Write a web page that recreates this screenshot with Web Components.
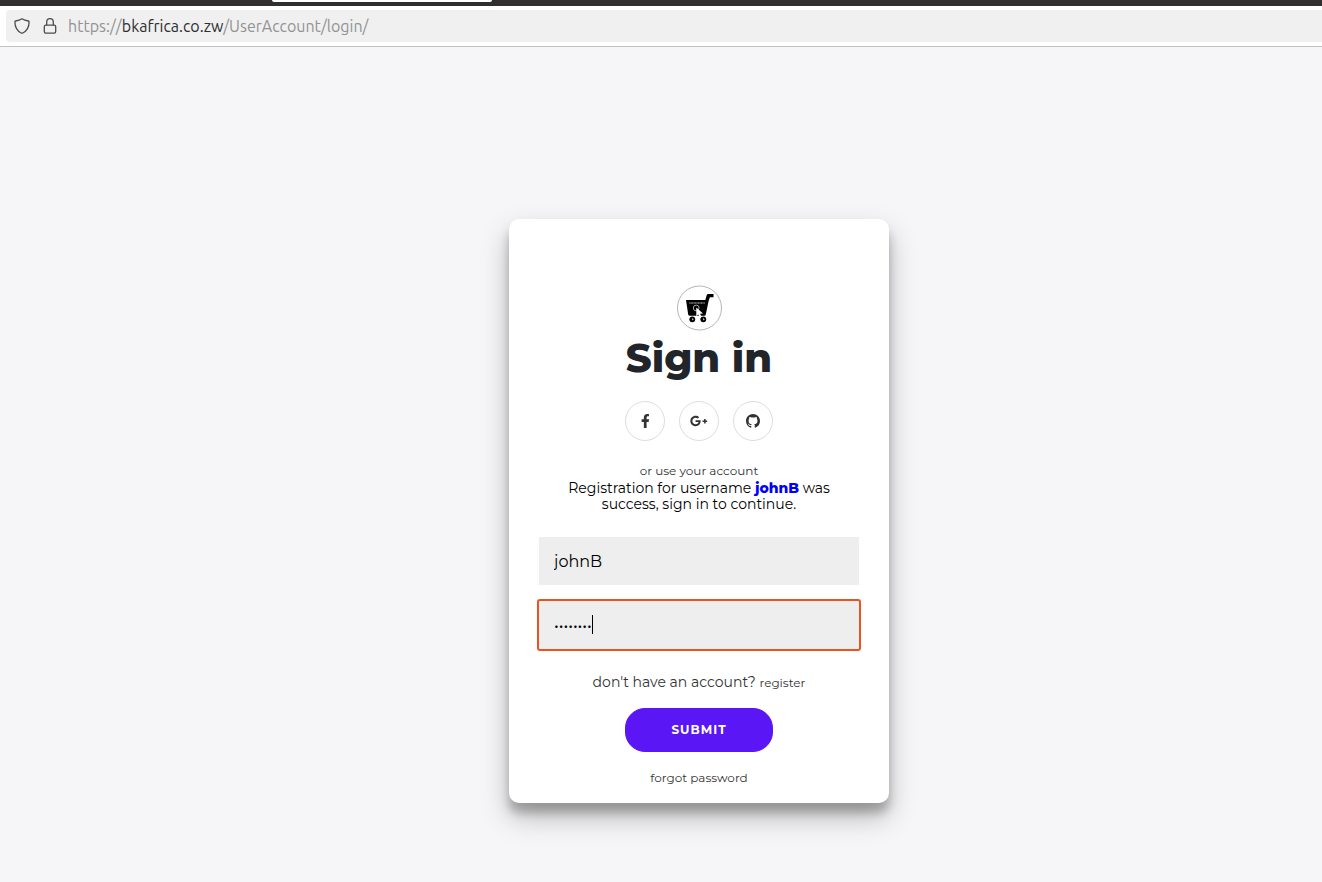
<!DOCTYPE html>
<html lang="en">
<head>
<meta charset="utf-8">
<meta name="viewport" content="width=device-width, initial-scale=1">
<title>Sign in</title>
<style>
  body {
    margin: 0;
    min-height: 100vh;
    display: flex;
    flex-direction: column;
    background: #f6f5f7;
    font-family: Montserrat, Inter, sans-serif;
    color: #333;
  }
</style>
</head>
<body>
<browser-bar>
  <span slot="scheme">https://</span>
  <span slot="host">bkafrica.co.zw</span>
  <span slot="path">/UserAccount/login/</span>
</browser-bar>
<login-page>
  <sign-in-card user="johnB"></sign-in-card>
</login-page>

<script>
class BrowserBar extends HTMLElement {
  constructor() {
    super();
    this.attachShadow({ mode: 'open' });
  }

  connectedCallback() {
    this.shadowRoot.innerHTML = `
      <style>
        :host {
          display: block;
          background: #fff;
          border-bottom: 1px solid #c2c2c3;
          font-family: Ubuntu, "Noto Sans", sans-serif;
          font-size: 16px;
        }

        .tabs {
          height: 6px;
          padding-left: 272px;
          background: #312e2f;
        }

        .tab {
          width: 220px;
          height: 2px;
          border-radius: 0 0 3px 3px;
          background: #fff;
        }

        .field {
          display: flex;
          align-items: center;
          height: 32px;
          margin: 4px 0 4px 6px;
          padding-left: 8px;
          border-radius: 4px 0 0 4px;
          background: #f0f0f0;
        }

        svg {
          flex: none;
          width: 16px;
          height: 16px;
          margin-right: 12px;
          fill: none;
          stroke: #4c4c4e;
          stroke-width: 1.3;
          stroke-linejoin: round;
        }

        svg + .url {
          margin-left: -2px;
        }

        .url {
          color: #939394;
          white-space: nowrap;
        }

        .host {
          color: #2e2e30;
        }
      </style>
      <div class="tabs"><div class="tab"></div></div>
      <div class="field">
        <svg viewBox="0 0 16 16"><path d="M8 .8C6.3 2 4 2.7 1.6 3c-.5.1-.7.4-.7.8 0 5 2 9 6.300 11.200q.8.400 1.600 0C13.100 12.800 15.100 8.800 15.100 3.800c0-.4-.2-.7-.7-.8C12 2.700 9.700 2 8 .8z"/></svg>
        <svg viewBox="0 0 16 16"><rect x="2.300" y="7.200" width="11.400" height="8" rx="1.600"/><path d="M4.700 7.200V4a3.300 3.300 0 0 1 6.600 0v3.200"/></svg>
        <div class="url"><slot name="scheme"></slot><span class="host"><slot name="host"></slot></span><slot name="path"></slot></div>
      </div>
    `;
  }
}

class LoginPage extends HTMLElement {
  constructor() {
    super();
    this.attachShadow({ mode: 'open' });
  }

  connectedCallback() {
    this.shadowRoot.innerHTML = `
      <style>
        :host {
          display: flex;
          flex: 1;
          justify-content: center;
          align-items: flex-start;
          padding: 172px 0 48px 76px;
        }
      </style>
      <slot></slot>
    `;
  }
}

class CartLogo extends HTMLElement {
  constructor() {
    super();
    this.attachShadow({ mode: 'open' });
  }

  connectedCallback() {
    this.shadowRoot.innerHTML = `
      <style>
        :host { display: block; }
        svg { display: block; width: 46px; height: 46px; }
      </style>
      <svg viewBox="0 0 46 46" role="img" aria-label="Shop logo">
        <circle cx="23.500" cy="23" r="22" fill="#fff" stroke="#b5b5b5"/>
        <path d="M10 15h19.300l1.500-5q.3-1 1.300-1h5.400v3.200h-3.600L32.600 16l-2.800 13.400q-.3 1.300-1.600 1.300H13.800q-1.300 0-1.600-1.300z" fill="#000"/>
        <path d="M13.300 18h15.400" stroke="#ccc" stroke-width="1.200" stroke-dasharray="1.300 .4 .8 .4"/>
        <circle cx="20.200" cy="23" r="2.900" fill="none" stroke="#bbb" stroke-width=".9"/>
        <path d="M20.300 22.500v8.800l2-1.700 1.500 3 1.700-.8-1.400-3 2.900-.3z" fill="#fff"/>
        <circle cx="16.300" cy="34.300" r="2.900" fill="#000"/>
        <circle cx="27.300" cy="34.300" r="2.900" fill="#000"/>
        <path d="M16 33.100l2 1.200-2 1.200zM27 33.100l2 1.200-2 1.200z" fill="#aaa"/>
      </svg>
    `;
  }
}

const socialIcons = {
  facebook: '<svg viewBox="0 0 320 512"><path d="M279.100 288l14.200-92.700h-88.900v-60.100c0-25.300 12.400-50.100 52.200-50.100h40.400V6.300S260.400 0 225.400 0c-73.200 0-121.100 44.400-121.100 124.700v70.600H22.900V288h81.400v224h100.200V288z"/></svg>',
  google: '<svg viewBox="0 0 640 512"><path d="M386.100 228.500c1.800 9.700 3.100 19.400 3.100 32C389.200 370.200 315.600 448 204.800 448c-106.100 0-192-85.900-192-192s85.900-192 192-192c51.900 0 95.100 18.900 128.600 50.300l-52.100 50c-14.100-13.600-39-29.600-76.500-29.600-65.500 0-118.900 54.200-118.900 121.300s53.400 121.300 118.900 121.300c76 0 104.500-54.700 109-82.800H204.800v-66h181.300zm185.400 6.400V179.200h-56v55.700h-55.700v56h55.700v55.700h56v-55.700h55.700v-56z"/></svg>',
  github: '<svg viewBox="0 0 16 16"><path d="M8 0C3.580 0 0 3.580 0 8c0 3.540 2.290 6.530 5.470 7.590.4.070.55-.17.55-.38 0-.19-.01-.82-.01-1.490-2.010.37-2.530-.49-2.690-.94-.09-.23-.48-.94-.82-1.130-.28-.15-.68-.52-.01-.53.63-.01 1.080.58 1.230.82.72 1.210 1.870.87 2.330.66.070-.52.28-.87.51-1.070-1.780-.2-3.640-.89-3.640-3.950 0-.87.31-1.590.82-2.150-.08-.2-.36-1.020.08-2.120 0 0 .67-.21 2.200.82a7.600 7.600 0 0 1 4 0c1.530-1.040 2.200-.82 2.200-.82.44 1.100.16 1.920.08 2.120.51.56.82 1.270.82 2.150 0 3.070-1.870 3.750-3.650 3.950.29.25.54.73.54 1.480 0 1.070-.01 1.930-.01 2.200 0 .21.15.46.55.38A8.010 8.010 0 0 0 16 8c0-4.420-3.580-8-8-8z"/></svg>'
};

class SocialLink extends HTMLElement {
  constructor() {
    super();
    this.attachShadow({ mode: 'open' });
  }

  connectedCallback() {
    const name = this.getAttribute('name');

    this.shadowRoot.innerHTML = `
      <style>
        :host { display: block; }

        a {
          display: flex;
          justify-content: center;
          align-items: center;
          box-sizing: border-box;
          width: 40px;
          height: 40px;
          border: 1px solid #ddd;
          border-radius: 50%;
          color: #333;
        }

        svg { height: 14px; fill: currentColor; }
      </style>
      <a href="#${name}" aria-label="Sign in with ${name}">${socialIcons[name]}</a>
    `;
  }
}

class LoginField extends HTMLElement {
  constructor() {
    super();
    this.attachShadow({ mode: 'open' });
  }

  connectedCallback() {
    const type = this.getAttribute('type') || 'text';
    const label = this.getAttribute('label');
    const value = this.getAttribute('value') || '';

    this.shadowRoot.innerHTML = `
      <style>
        :host {
          display: block;
          position: relative;
        }

        input {
          display: block;
          box-sizing: border-box;
          width: 100%;
          height: 48px;
          padding: 0 15px;
          border: none;
          outline: none;
          background: #eee;
          color: #000;
          font-family: inherit;
          font-size: 16px;
        }

        input[type="password"] {
          caret-color: transparent;
        }

        :host([active]) input {
          outline: 2px solid #e95420;
          border-radius: 1px;
        }

        /* text cursor of the active field */
        :host([active])::after {
          content: "";
          position: absolute;
          top: 14px;
          left: 53px;
          width: 1px;
          height: 19px;
          background: #000;
        }
      </style>
      <input type="${type}" aria-label="${label}" value="${value}">
    `;
  }
}

class SignInCard extends HTMLElement {
  constructor() {
    super();
    this.attachShadow({ mode: 'open' });
  }

  connectedCallback() {
    const user = this.getAttribute('user');

    this.shadowRoot.innerHTML = `
      <style>
        :host {
          display: block;
          box-sizing: border-box;
          width: 100%;
          max-width: 380px;
          padding: 66px 30px 15px;
          border-radius: 10px;
          background: #fff;
          box-shadow: 0 14px 28px rgba(0, 0, 0, 0.25), 0 10px 10px rgba(0, 0, 0, 0.22);
        }

        form {
          display: flex;
          flex-direction: column;
          align-items: center;
          text-align: center;
        }

        h1 {
          margin: 0;
          color: #212529;
          font-size: 40px;
          font-weight: 800;
          line-height: 54px;
        }

        .social {
          display: flex;
          gap: 14px;
          margin: 16px 0 21px;
        }

        .small {
          font-size: 12px;
          line-height: 18px;
        }

        .note {
          margin: 0;
          color: #000;
          font-size: 14px;
          line-height: 16px;
        }

        .note b {
          color: #00f;
          font-weight: 800;
        }

        .fields {
          display: flex;
          flex-direction: column;
          gap: 16px;
          width: 100%;
          margin: 25px 0 23px;
        }

        .join {
          font-size: 14px;
          line-height: 20px;
        }

        a {
          color: #333;
          font-size: 12px;
          line-height: 20px;
          text-decoration: none;
        }

        button {
          margin: 15px 0 16px;
          padding: 12px 45px;
          border: 1px solid #5a16f5;
          border-radius: 20px;
          background: #5a16f5;
          color: #fff;
          font-family: inherit;
          font-size: 12px;
          font-weight: 700;
          line-height: 18px;
          letter-spacing: 1px;
          text-transform: uppercase;
        }
      </style>
      <form>
        <cart-logo></cart-logo>
        <h1>Sign in</h1>
        <div class="social">
          <social-link name="facebook"></social-link>
          <social-link name="google"></social-link>
          <social-link name="github"></social-link>
        </div>
        <span class="small">or use your account</span>
        <p class="note">Registration for username <b>${user}</b> was<br>success, sign in to continue.</p>
        <div class="fields">
          <login-field label="Username" value="${user}"></login-field>
          <login-field label="Password" type="password" value="password" active></login-field>
        </div>
        <div class="join">don't have an account? <a href="#register">register</a></div>
        <button type="button">Submit</button>
        <a href="#forgot">forgot password</a>
      </form>
    `;
  }
}

customElements.define('browser-bar', BrowserBar);
customElements.define('login-page', LoginPage);
customElements.define('cart-logo', CartLogo);
customElements.define('social-link', SocialLink);
customElements.define('login-field', LoginField);
customElements.define('sign-in-card', SignInCard);
</script>
</body>
</html>
